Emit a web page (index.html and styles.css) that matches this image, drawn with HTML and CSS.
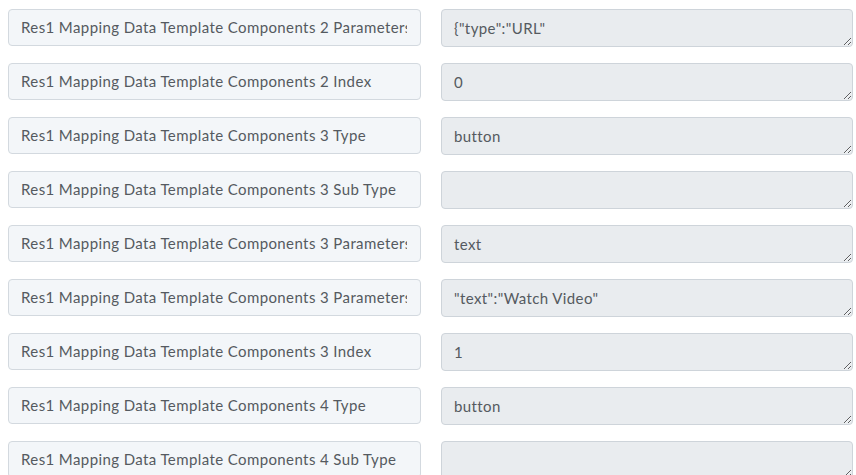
FILE: index.html
```html
<!DOCTYPE html>
<html>
<head>
<meta charset="utf-8">
<link rel="stylesheet" href="styles.css">
</head>
<body>
<div class="form">
  <div class="row"><div class="label-box"><span class="label-text">Res1 Mapping Data Template Components 2 Parameters</span></div><textarea class="value" disabled>{"type":"URL"</textarea></div>
  <div class="row"><div class="label-box"><span class="label-text">Res1 Mapping Data Template Components 2 Index</span></div><textarea class="value" disabled>0</textarea></div>
  <div class="row"><div class="label-box"><span class="label-text">Res1 Mapping Data Template Components 3 Type</span></div><textarea class="value" disabled>button</textarea></div>
  <div class="row"><div class="label-box"><span class="label-text">Res1 Mapping Data Template Components 3 Sub Type</span></div><textarea class="value" disabled></textarea></div>
  <div class="row"><div class="label-box"><span class="label-text">Res1 Mapping Data Template Components 3 Parameters</span></div><textarea class="value" disabled>text</textarea></div>
  <div class="row"><div class="label-box"><span class="label-text">Res1 Mapping Data Template Components 3 Parameters</span></div><textarea class="value" disabled>"text":"Watch Video"</textarea></div>
  <div class="row"><div class="label-box"><span class="label-text">Res1 Mapping Data Template Components 3 Index</span></div><textarea class="value" disabled>1</textarea></div>
  <div class="row"><div class="label-box"><span class="label-text">Res1 Mapping Data Template Components 4 Type</span></div><textarea class="value" disabled>button</textarea></div>
  <div class="row"><div class="label-box"><span class="label-text">Res1 Mapping Data Template Components 4 Sub Type</span></div><textarea class="value" disabled></textarea></div>
</div>
</body>
</html>
```
FILE: styles.css
```css
html, body {
  margin: 0;
  padding: 0;
  background: #ffffff;
  overflow: hidden;
}
body {
  font-family: Lato, "Open Sans", sans-serif;
  font-size: 15px;
  letter-spacing: 0.4px;
  color: #555a60;
}
.form {
  display: flex;
  flex-direction: column;
  gap: 16px;
  padding: 9px 3px 0 8px;
}
.row {
  display: grid;
  grid-template-columns: 413px 412px;
  column-gap: 20px;
  align-items: start;
}
.label-box {
  box-sizing: border-box;
  height: 37px;
  border: 1px solid #d3d9df;
  border-radius: 4px;
  background: #f3f6f9;
  padding: 8px 13px 8px 12px;
  line-height: 19px;
}
.label-text {
  display: block;
  white-space: nowrap;
  overflow: hidden;
}
.value {
  box-sizing: border-box;
  height: 38px;
  margin: 0;
  border: 1px solid #ced4da;
  border-radius: 4px;
  background: #e9ecef;
  padding: 9px 12px 8px;
  line-height: 19px;
  font-family: Lato, "Open Sans", sans-serif;
  font-size: 15px;
  letter-spacing: 0.4px;
  color: #555a60;
  resize: vertical;
  overflow: hidden;
}
```
